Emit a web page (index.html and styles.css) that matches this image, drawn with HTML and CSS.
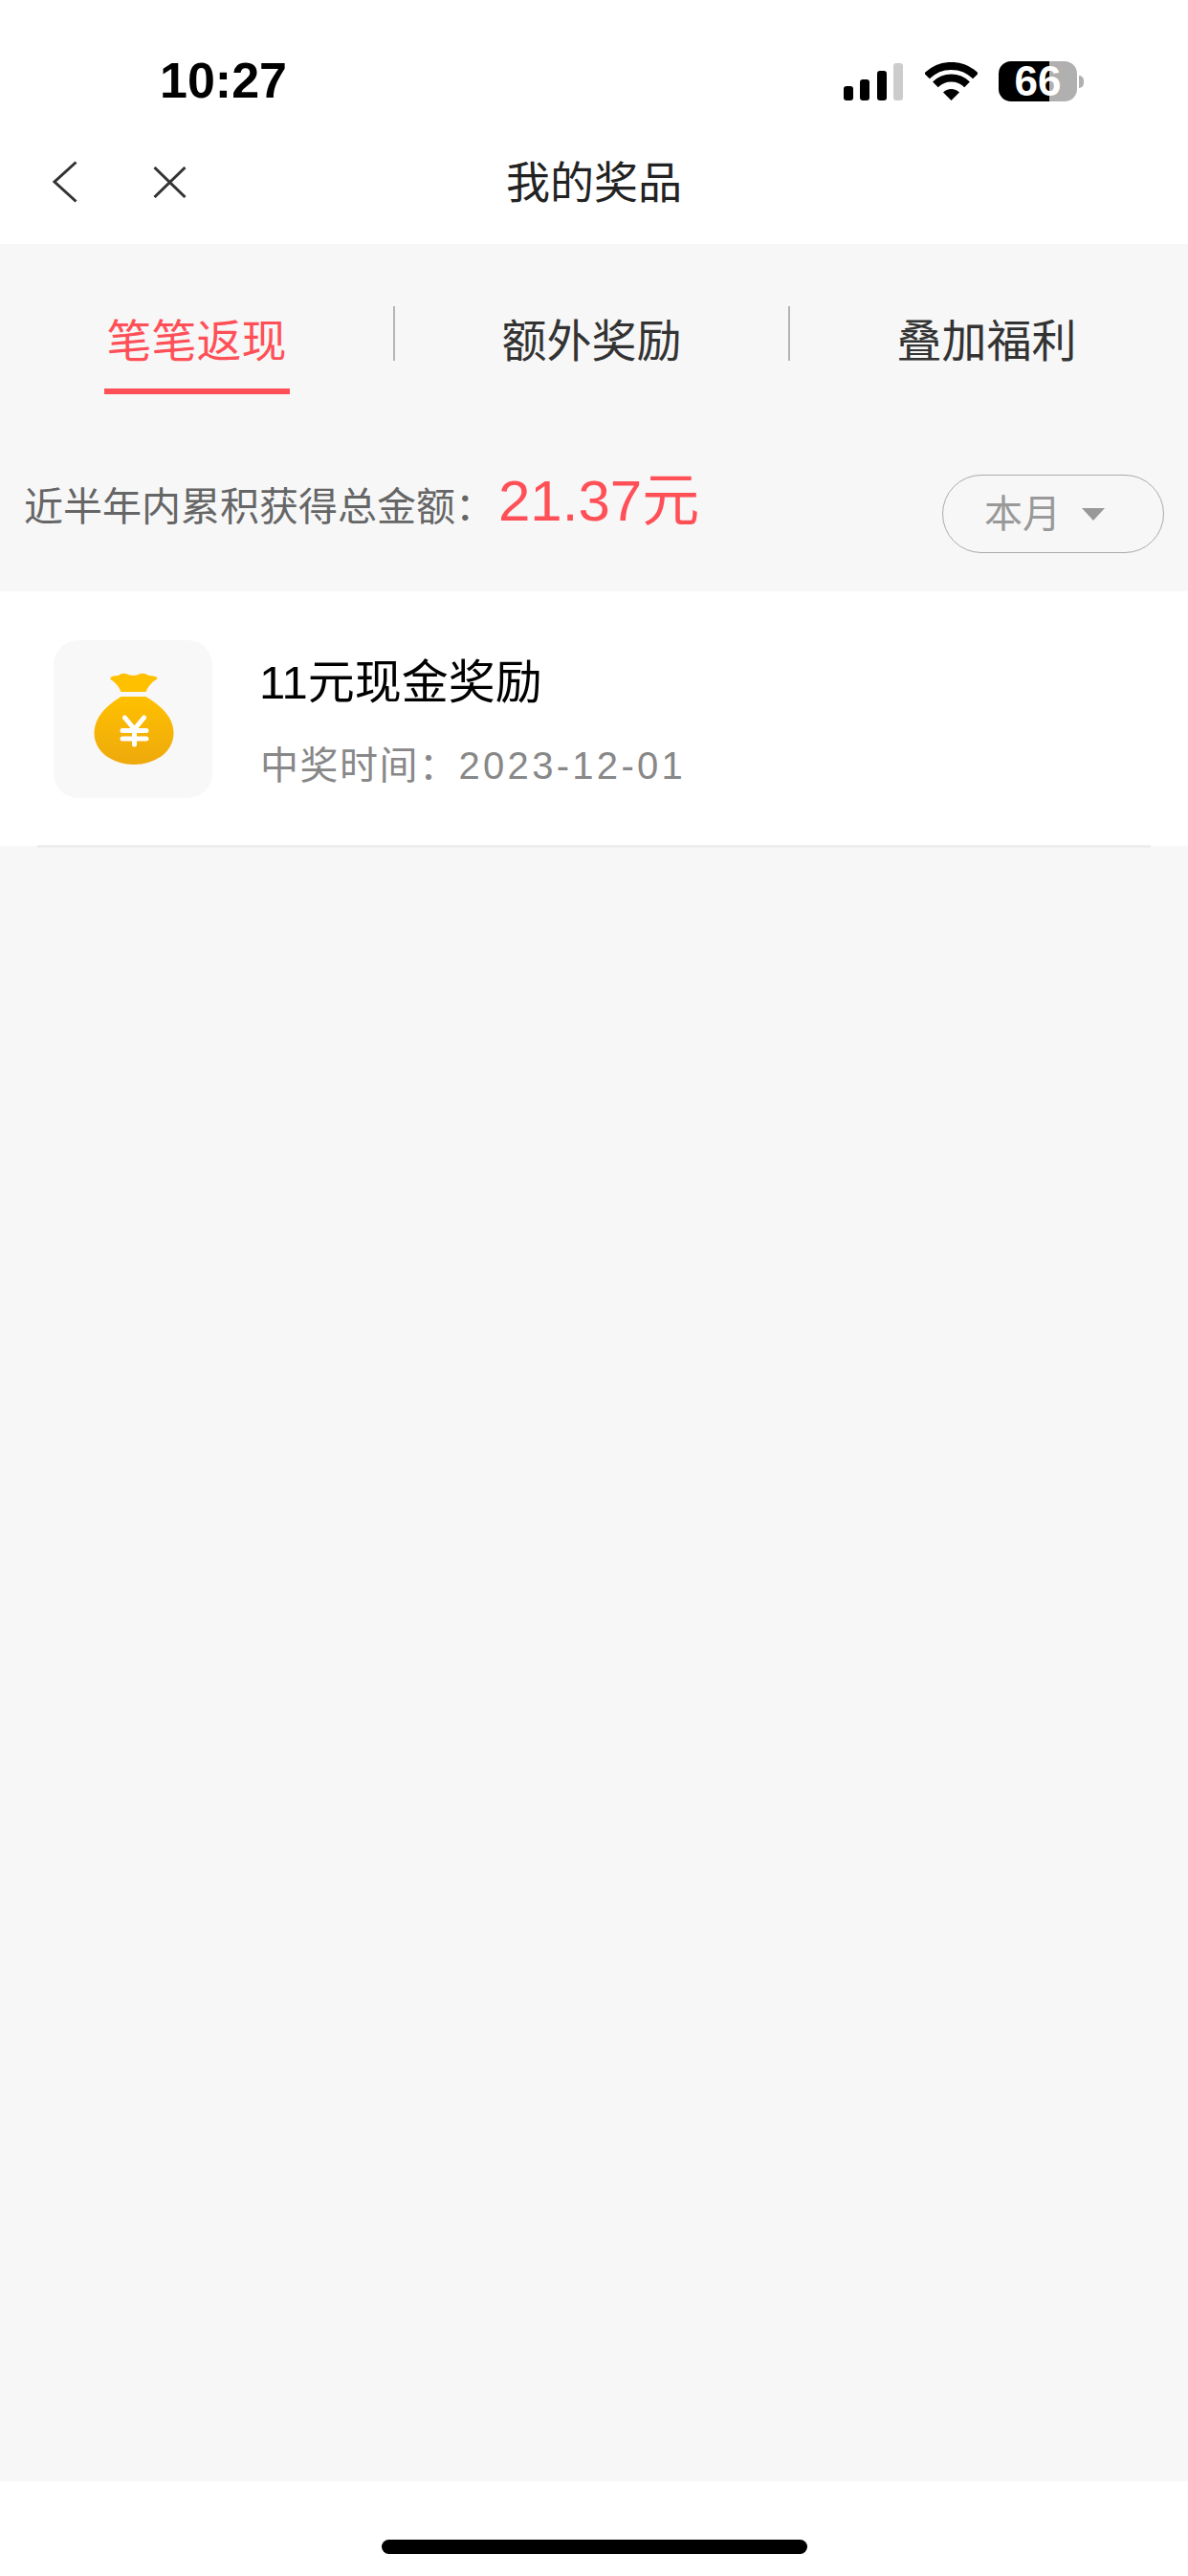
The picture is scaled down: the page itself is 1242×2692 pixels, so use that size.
FILE: index.html
```html
<!DOCTYPE html>
<html lang="zh">
<head>
    <meta charset="UTF-8">
    <meta name="viewport" content="width=device-width, initial-scale=1.0">
    <title>我的奖品</title>
    <link rel="stylesheet" href="styles.css">
</head>
<body>

<div class="page">
    <div class="status-bar">
        <span class="time">10:27</span>
        <div class="status-icons">
            <svg class="signal" width="62" height="39" viewBox="0 0 62 39">
                <rect x="0" y="24" width="10" height="15" rx="3" fill="#000"/>
                <rect x="17" y="17" width="10" height="22" rx="3" fill="#000"/>
                <rect x="35" y="8" width="10" height="31" rx="3" fill="#000"/>
                <rect x="52" y="0" width="10" height="39" rx="3" fill="#ccc"/>
            </svg>
            <svg class="wifi" width="55" height="40" viewBox="0 0 55 40">
                <path d="M2 14.5A36 36 0 0 1 53 14.5" fill="none" stroke="#000" stroke-width="8"/>
                <path d="M10.9 23.4A23.5 23.5 0 0 1 44.1 23.4" fill="none" stroke="#000" stroke-width="8"/>
                <path d="M27.5 40L19 31.5A12 12 0 0 1 36 31.5Z" fill="#000"/>
            </svg>
            <div class="battery"><span>66</span></div>
        </div>
    </div>

    <div class="nav">
        <div class="nav-icons">
            <svg width="26" height="44" viewBox="0 0 26 44">
                <path d="M24.5 1.500L2 22L24.5 42.500" fill="none" stroke="#333" stroke-width="3"/>
            </svg>
            <svg width="35" height="33" viewBox="0 0 35 33">
                <path d="M1.500 1L33.500 32M33.500 1L1.500 32" fill="none" stroke="#333" stroke-width="3"/>
            </svg>
        </div>
        <div class="nav-title">我的奖品</div>
    </div>

    <div class="main">
        <div class="tabs">
            <div class="tab"><span class="tab-label active">笔笔返现</span></div>
            <div class="tab-divider"></div>
            <div class="tab"><span class="tab-label">额外奖励</span></div>
            <div class="tab-divider"></div>
            <div class="tab"><span class="tab-label">叠加福利</span></div>
        </div>

        <div class="summary">
            <div class="summary-text">
                <span class="summary-label">近半年内累积获得总金额：</span>
                <span class="summary-amount">21.37元</span>
            </div>
            <div class="month-picker">
                <span class="month-text">本月</span>
                <i class="caret"></i>
            </div>
        </div>

        <div class="prize">
            <div class="prize-icon">
                <svg class="bag" width="84" height="96" viewBox="0 0 83 96">
                    <defs>
                        <linearGradient id="bagFill" x1="0" y1="0" x2="0" y2="1">
                            <stop offset="0" stop-color="#ffc000"/>
                            <stop offset="1" stop-color="#eea90c"/>
                        </linearGradient>
                    </defs>
                    <path d="M17 5Q19 3 25 3Q29 0 33 1Q37 3 41 3Q45 3 48 1Q53 0 57 3Q63 3 66 5Q66 7 62 9Q57 13 54 20H28Q25 13 20 9Q16 7 17 5Z" fill="#ffc000"/>
                    <path d="M28 25H54Q83 42 83 63C83 84 62 96 41.500 96C21 96 0 84 0 63Q0 42 28 25Z" fill="url(#bagFill)"/>
                    <path d="M32 47L42 59L52 47M29.500 60.500H54.500M29.500 69H54.500M42 59V75" fill="none" stroke="#fff" stroke-width="5" stroke-linecap="round" stroke-linejoin="round"/>
                </svg>
            </div>
            <div class="prize-info">
                <div class="prize-name">11元现金奖励</div>
                <div class="prize-time">中奖时间：<span class="prize-date">2023-12-01</span></div>
            </div>
        </div>
        <div class="prize-line"></div>
    </div>

    <div class="home-area">
        <div class="home-bar"></div>
    </div>
</div>

</body>
</html>
```

FILE: styles.css
```css
* {
    box-sizing: border-box;
}
body {
    margin: 0;
    background-color: #fff;
    font-family: "Liberation Sans", "Noto Sans CJK SC", sans-serif;
}
.page {
    display: flex;
    flex-direction: column;
    width: 1242px;
    height: 2692px;
}

/* status bar */
.status-bar {
    display: flex;
    align-items: center;
    justify-content: space-between;
    height: 130px;
    padding: 38px 116px 0 167px;
}
.time {
    font-size: 52px;
    font-weight: 700;
    color: #000;
}
.status-icons {
    display: flex;
    align-items: flex-end;
}
.wifi {
    margin-left: 23px;
}
.battery {
    position: relative;
    width: 82px;
    height: 42px;
    margin-left: 22px;
    margin-bottom: -1px;
    border-radius: 13px;
    background: linear-gradient(to right, #000 65%, #b0b0b0 65%);
    color: #fff;
    font-size: 44px;
    font-weight: 700;
    line-height: 42px;
    text-align: center;
}
.battery::after {
    content: "";
    position: absolute;
    left: 84px;
    top: 15px;
    width: 5px;
    height: 13px;
    border-radius: 0 5px 5px 0;
    background-color: #b0b0b0;
}

/* nav */
.nav {
    position: relative;
    height: 125px;
}
.nav-icons {
    display: flex;
    align-items: center;
    gap: 79px;
    height: 120px;
    padding-left: 55px;
}
.nav-title {
    position: absolute;
    left: 0;
    right: 0;
    top: 0;
    color: #222;
    font-size: 46px;
    line-height: 122px;
    text-align: center;
}

.main {
    flex: 1;
    background-color: #f7f7f7;
}

/* tabs */
.tabs {
    display: flex;
    align-items: flex-start;
    padding: 65px 5px 0 0;
}
.tab {
    flex: 1;
    text-align: center;
}
.tab-label {
    display: inline-block;
    width: 194px;
    height: 92px;
    color: #333;
    font-size: 47px;
    line-height: 74px;
}
.tab-label.active {
    border-bottom: 6px solid #ff5058;
    color: #ff5058;
}
.tab-divider {
    width: 2px;
    height: 57px;
    background-color: #b5b5b5;
}

/* summary */
.summary {
    display: flex;
    height: 206px;
    padding: 84px 25px 0;
}
.summary-text {
    display: flex;
    align-items: baseline;
    height: 60px;
    line-height: 56px;
}
.summary-label {
    color: #666;
    font-size: 41px;
}
.summary-amount {
    margin-left: 4px;
    color: #ff5058;
    font-size: 60px;
}
.month-picker {
    display: flex;
    align-items: center;
    width: 232px;
    height: 82px;
    margin-left: auto;
    padding-left: 43px;
    border: 1.5px solid #aaa;
    border-radius: 41px;
    color: #999;
    font-size: 40px;
}
.month-text {
    margin-bottom: 6px;
}
.caret {
    width: 0;
    height: 0;
    margin-left: 22px;
    border-left: 12px solid transparent;
    border-right: 12px solid transparent;
    border-top: 13px solid #999;
}

/* prize row */
.prize {
    display: flex;
    align-items: center;
    height: 266px;
    padding-left: 56px;
    background-color: #fff;
}
.prize-icon {
    display: flex;
    align-items: center;
    justify-content: center;
    width: 166px;
    height: 165px;
    padding-left: 2px;
    border-radius: 26px;
    background-color: #f8f8f8;
}
.prize-info {
    margin-left: 50px;
    padding-top: 5px;
}
.prize-name {
    margin-left: -1px;
    color: #000;
    font-size: 49px;
    line-height: 60px;
}
.prize-time {
    margin-top: 32px;
    color: #888;
    font-size: 40px;
    line-height: 50px;
    letter-spacing: 1.5px;
}
.prize-date {
    letter-spacing: 3.3px;
}
.prize-line {
    height: 3px;
    margin: -1px 39px 0;
    background-color: #eee;
}

.home-area {
    display: flex;
    justify-content: center;
    height: 99px;
    padding-top: 61px;
}
.home-bar {
    width: 445px;
    height: 15px;
    border-radius: 8px;
    background-color: #000;
}
```
